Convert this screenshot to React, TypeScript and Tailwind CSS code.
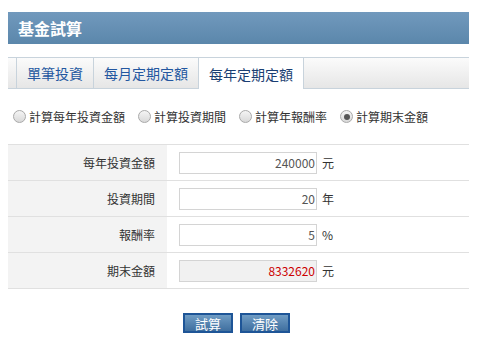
import { useState } from "react";

const tabs = ["單筆投資", "每月定期定額", "每年定期定額"];
const modes = ["計算每年投資金額", "計算投資期間", "計算年報酬率", "計算期末金額"];

const rows = [
  { label: "每年投資金額", value: "240000", unit: "元" },
  { label: "投資期間", value: "20", unit: "年" },
  { label: "報酬率", value: "5", unit: "%" },
  { label: "期末金額", value: "8332620", unit: "元", result: true },
];

export default function App() {
  const [tab, setTab] = useState(2);
  const [mode, setMode] = useState(3);

  return (
    <div
      className="w-[477px] h-[353px] bg-white pt-3 px-2 text-[12px] text-[#333]"
      style={{ fontFamily: '"Noto Sans CJK TC", "Noto Sans", sans-serif' }}
    >
      {/* Header bar */}
      <div className="h-8 bg-gradient-to-b from-[#7199bd] to-[#5b87ab] pl-[10px] flex items-center">
        <span className="text-white text-[16px] font-bold leading-none">基金試算</span>
      </div>

      {/* Tabs */}
      <div className="mt-[13px] h-8 flex border-t border-b border-[#c8d3dc] bg-gradient-to-b from-[#fbfbfb] to-[#e6e6e6]">
        <div className="w-[9px] border-r border-[#c8d3dc]" />
        {tabs.map((t, i) => {
          const active = i === tab;
          return (
            <button
              key={t}
              onClick={() => setTab(i)}
              className={
                active
                  ? "px-[10px] -mb-px bg-white border-r border-[#c8d3dc] text-[#1b3f73] text-[14px] leading-none"
                  : "px-[10px] border-r border-[#c8d3dc] text-[#2357a0] text-[14px] leading-none"
              }
            >
              {t}
            </button>
          );
        })}
      </div>

      {/* Mode radios */}
      <div className="h-[55px] flex items-center pl-[5px] gap-[13px]">
        {modes.map((m, i) => (
          <label key={m} className="flex items-center gap-[3px] cursor-pointer" onClick={() => setMode(i)}>
            <span className="w-[13px] h-[13px] rounded-full border border-[#a9a9a9] bg-gradient-to-b from-[#f4f4f4] to-[#d9d9d9] flex items-center justify-center">
              {mode === i && <span className="w-[6px] h-[6px] rounded-full bg-[#555]" />}
            </span>
            <span className="leading-none">{m}</span>
          </label>
        ))}
      </div>

      {/* Form table */}
      <div className="border-t border-[#e0e0e0]">
        {rows.map((r) => (
          <div key={r.label} className="h-9 flex border-b border-[#e0e0e0]">
            <div className="w-[159px] bg-[#f3f3f3] flex items-center justify-end pr-[12px]">{r.label}</div>
            <div className="flex items-center pl-[12px]">
              <input
                readOnly
                value={r.value}
                className={
                  r.result
                    ? "w-[138px] h-[22px] border border-[#d4d4d4] bg-[#f1f1f1] text-right pr-[1px] text-[#cc0000] outline-none"
                    : "w-[138px] h-[22px] border border-[#d4d4d4] bg-white text-right pr-[1px] text-[#555] outline-none"
                }
              />
              <span className="ml-[5px]">{r.unit}</span>
            </div>
          </div>
        ))}
      </div>

      {/* Buttons */}
      <div className="mt-[24px] flex justify-center gap-[7px] pr-[4px]">
        <button className="w-[50px] h-[20px] border-2 border-[#1e5597] bg-gradient-to-b from-[#6f9cc4] to-[#3f6f9f] text-white text-[13px] leading-none">
          試算
        </button>
        <button className="w-[50px] h-[20px] border-2 border-[#1e5597] bg-gradient-to-b from-[#6f9cc4] to-[#3f6f9f] text-white text-[13px] leading-none">
          清除
        </button>
      </div>
    </div>
  );
}
